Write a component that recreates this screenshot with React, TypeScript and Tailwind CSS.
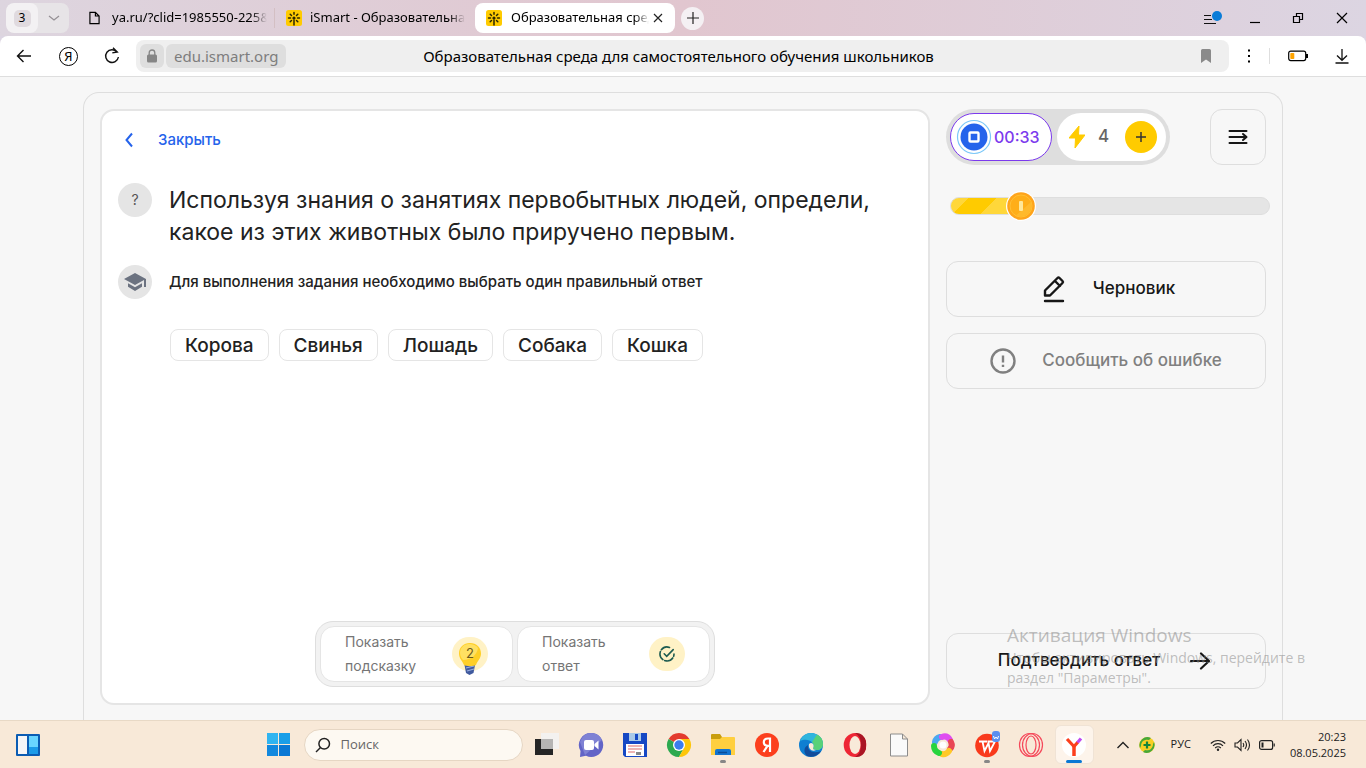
import React from "react";

const answers = ["Корова", "Свинья", "Лошадь", "Собака", "Кошка"];

function SmartLogo() {
  return (
    <svg viewBox="0 0 16 16" className="size-4 shrink-0">
      <rect width="16" height="16" rx="2.5" fill="#ffcb00" />
      <g stroke="#2b2600" strokeWidth="1.5" strokeLinecap="round">
        <path d="M8 2.6v1.6M8 10v5M2.5 8h2M11.5 8h2M4.2 4.2l1.3 1.3M11.8 4.2l-1.3 1.3M4.2 11.8l1.3-1.3M11.8 11.8l-1.3-1.3" />
      </g>
      <circle cx="8" cy="8" r="1.6" fill="#2b2600" />
    </svg>
  );
}

function TabStrip() {
  return (
    <div className="flex h-9 shrink-0 items-center bg-linear-to-r from-[#ddd5df] via-[#e1c6cf] to-[#dcd5e2] text-[13px] text-black">
      <div className="ml-[6px] flex h-[30px] w-[63px] shrink-0 overflow-hidden rounded-lg bg-[#e7e4e7]">
        <button className="flex w-8 items-center justify-center rounded-lg bg-[#f3f1f3] text-xs">
          <span className="flex size-[17px] items-center justify-center rounded-[5px] bg-[#e0dadf]">3</span>
        </button>
        <button aria-label="Список вкладок" className="flex flex-1 items-center justify-center">
          <svg viewBox="0 0 12 8" className="h-2 w-3" fill="none" stroke="#969196" strokeWidth="1.3">
            <path d="M1 2l5 4 5-4" />
          </svg>
        </button>
      </div>
      <button className="ml-5 flex w-[186px] shrink-0 items-center gap-3 border-r border-[#d3bfc3] whitespace-nowrap">
        <svg viewBox="0 0 12 14" className="h-[14px] w-[11px] shrink-0" fill="none" stroke="#000" strokeWidth="1.3">
          <path d="M1 .8h6l4 4v8.4H1zM7 .8v4h4" />
        </svg>
        <span className="w-[155px] overflow-hidden mask-r-from-90% text-left">ya.ru/?clid=1985550-225&amp;</span>
      </button>
      <button className="ml-[11px] flex w-[189px] shrink-0 items-center gap-2 whitespace-nowrap">
        <SmartLogo />
        <span className="w-[155px] overflow-hidden mask-r-from-90% text-left">iSmart - Образовательная</span>
      </button>
      <div className="flex h-[30px] w-[200px] shrink-0 items-center rounded-lg bg-white px-[11px] whitespace-nowrap">
        <SmartLogo />
        <span className="ml-[9px] w-[138px] overflow-hidden mask-r-from-90%">Образовательная среда</span>
        <button aria-label="Закрыть вкладку" className="ml-1">
          <svg viewBox="0 0 10 10" className="size-[10px]" stroke="#222" strokeWidth="1.2">
            <path d="M1 1l8 8M9 1l-8 8" />
          </svg>
        </button>
      </div>
      <button aria-label="Новая вкладка" className="ml-[6px] flex size-[23px] shrink-0 items-center justify-center rounded-full bg-[#f4f0f3]">
        <svg viewBox="0 0 12 12" className="size-3" stroke="#222" strokeWidth="1.2">
          <path d="M6 0v12M0 6h12" />
        </svg>
      </button>
      <div className="ml-auto flex items-center pr-[18px]">
        <button aria-label="Меню" className="mr-[27px]">
          <svg viewBox="0 0 20 16" className="h-4 w-5" fill="none" stroke="#111" strokeWidth="1.2">
            <path d="M1 5.5h7M1 9.5h8M1 13.5h12" />
            <circle cx="14" cy="6" r="5" fill="#0a7cd8" stroke="none" />
          </svg>
        </button>
        <button aria-label="Свернуть" className="mr-8">
          <svg viewBox="0 0 10 12" className="h-3 w-[10px]" stroke="#000" strokeWidth="1.2">
            <path d="M0 10.5h10" />
          </svg>
        </button>
        <button aria-label="Развернуть" className="mr-8">
          <svg viewBox="0 0 12 12" className="size-3" fill="none" stroke="#000" strokeWidth="1.2">
            <path d="M1.5 4.5h6v6h-6zM4.500 4.500v-3h6v6h-3" />
          </svg>
        </button>
        <button aria-label="Закрыть">
          <svg viewBox="0 0 12 12" className="size-3" stroke="#000" strokeWidth="1.2">
            <path d="M1 1l10 10M11 1L1 11" />
          </svg>
        </button>
      </div>
    </div>
  );
}

function AddressBar() {
  return (
    <div className="shrink-0 bg-[#dcd5e2]">
      <div className="flex h-[41px] items-center rounded-t-lg border-b border-[#dedede] bg-white pr-[17px] pl-4 text-[15px] text-black">
        <button aria-label="Назад" className="mr-[27px]">
          <svg viewBox="0 0 16 16" className="size-4" fill="none" stroke="#111" strokeWidth="1.4">
            <path d="M15 8H1.500M7.500 2l-6 6 6 6" />
          </svg>
        </button>
        <button aria-label="Яндекс" className="mr-[26px] flex size-[19px] items-center justify-center rounded-full border border-black text-[13px] leading-none">
          Я
        </button>
        <button aria-label="Обновить" className="mr-4">
          <svg viewBox="0 0 16 18" className="h-[18px] w-4" fill="none" stroke="#111" strokeWidth="1.4">
            <path d="M13 5A6.400 6.400 0 1 0 14.400 10M9 .8l4.300 4.200-5 .9" />
          </svg>
        </button>
        <div className="relative flex h-8 flex-1 items-center rounded-lg bg-[#efefef] pl-1">
          <button aria-label="Защита" className="flex size-6 items-center justify-center rounded-md bg-[#dedede]">
            <svg viewBox="0 0 12 14" className="h-[14px] w-3">
              <rect x="1" y="5.500" width="10" height="8" rx="1.500" fill="#858585" />
              <path d="M3.200 6V3.800a2.800 2.800 0 0 1 5.600 0V6" fill="none" stroke="#858585" strokeWidth="1.300" />
            </svg>
          </button>
          <button className="ml-[2px] flex h-6 items-center rounded-md bg-[#dedede] px-2 text-[#7d7d7d]">
            edu.ismart.org
          </button>
          <span className="pointer-events-none absolute inset-x-0 pr-2 text-center whitespace-nowrap">
            Образовательная среда для самостоятельного обучения школьников
          </span>
          <button aria-label="Закладка" className="mr-[18px] ml-auto">
            <svg viewBox="0 0 10 14" className="h-[14px] w-[10px]" fill="#8a8a8a">
              <path d="M1.500 0h7A1.500 1.500 0 0 1 10 1.500V14L5 10.500 0 14V1.500A1.500 1.500 0 0 1 1.500 0z" />
            </svg>
          </button>
        </div>
        <button aria-label="Ещё" className="ml-[18px]">
          <svg viewBox="0 0 4 14" className="h-[14px] w-1" fill="#000">
            <path d="M1 .5h2v2H1zM1 6h2v2H1zM1 11.500h2v2H1z" />
          </svg>
        </button>
        <div className="ml-[18px] h-4 w-px bg-[#dedede]" />
        <svg viewBox="0 0 20 12" className="mr-[27px] ml-[18px] h-3 w-5" fill="none">
          <rect x=".7" y="1.200" width="17" height="9.400" rx="2" stroke="#000" strokeWidth="1.200" />
          <rect x="2.300" y="3" width="4" height="6" rx=".8" fill="#ffa400" />
          <path d="M19 4v4" stroke="#000" strokeWidth="2" />
        </svg>
        <button aria-label="Загрузки">
          <svg viewBox="0 0 14 16" className="h-4 w-[14px]" fill="none" stroke="#111" strokeWidth="1.300">
            <path d="M7 1v11M2 7.500l5 4.800 5-4.800M.5 15h13" />
          </svg>
        </button>
      </div>
    </div>
  );
}

function HintBar() {
  return (
    <div className="mx-auto mt-auto grid w-full max-w-[400px] grid-cols-2 gap-1 rounded-[18px] border border-[#dedede] bg-[#f2f2f2] p-1 text-sm leading-6 text-[#757575]">
      <button className="flex h-14 items-center justify-between rounded-[14px] border border-[#e5e5e5] bg-white px-6 text-left">
        <span>
          Показать
          <br />
          подсказку
        </span>
        <span className="relative flex h-[34px] w-9 items-center justify-center rounded-full bg-[#fff2c6]">
          <svg viewBox="0 0 36 42" className="absolute top-0 left-0 h-[42px] w-9">
            <path d="M12.500 28l1.500 8 3.500 2 4-2 1.500-8z" fill="#405a9e" />
            <path d="M14 31l8-2M15 34l7-2" stroke="#9aaee0" strokeWidth="1.200" />
            <path d="M18 6c-6.500 0-11 4.600-11 10.500 0 5 3.200 7 5 11.500 1.500 1.500 10 1.500 12 0 1.600-4.400 5-6.500 5-11.500C29 10.600 24.500 6 18 6z" fill="#ffcf26" />
            <path d="M17 7c-5.500 0-9 4-9 9 0 3 1.500 5 3 7 8 0 14-5 15-12-2-2.500-5-4-9-4z" fill="#ffe062" />
          </svg>
          <span className="relative pb-[2px] text-[13px] leading-none text-[#6b5a1e]">2</span>
        </span>
      </button>
      <button className="flex h-14 items-center justify-between rounded-[14px] border border-[#e5e5e5] bg-white px-6 text-left">
        <span>
          Показать
          <br />
          ответ
        </span>
        <span className="flex h-[34px] w-9 items-center justify-center rounded-full bg-[#fff2c6]">
          <svg viewBox="0 0 16 16" className="size-4" fill="none" stroke="#1d5b50" strokeWidth="1.600" strokeLinecap="round">
            <path d="M10.500 1.400A7 7 0 1 0 15 8" strokeDasharray="9 2" />
            <path d="M5.200 7.800l2.500 2.500 6.500-6.700" />
          </svg>
        </span>
      </button>
    </div>
  );
}

function TaskCard() {
  return (
    <section className="flex min-w-0 flex-1 flex-col rounded-[14px] border-2 border-[#e5e5e5] bg-white px-4 pb-4 text-[#222]">
      <button className="mt-[17px] flex items-center gap-6 self-start pl-[6px] text-[15px] leading-6 font-medium text-[#2563eb]">
        <svg viewBox="0 0 10 16" className="h-4 w-[10px]" fill="none" stroke="#2563eb" strokeWidth="2">
          <path d="M8 1.500L2.500 8 8 14.500" />
        </svg>
        Закрыть
      </button>
      <div className="mt-[31px] flex gap-[17px]">
        <div className="flex size-[34px] shrink-0 items-center justify-center rounded-full bg-[#e5e5e5] text-sm text-[#555]">?</div>
        <h1 className="pt-px text-[23px] leading-8 font-normal">
          Используя знания о занятиях первобытных людей, определи, какое из этих животных было приручено первым.
        </h1>
      </div>
      <div className="mt-[17px] flex items-center gap-[17px]">
        <div className="flex size-[34px] shrink-0 items-center justify-center rounded-full bg-[#e5e5e5]">
          <svg viewBox="0 0 24 24" className="size-6" fill="#6b7280">
            <path d="M5 13.200v3.600L12 21l7-4.200v-3.600L12 17.300zM12 3L1 9l11 6 9-4.900V17h2V9z" />
          </svg>
        </div>
        <p className="text-[15px] font-medium">Для выполнения задания необходимо выбрать один правильный ответ</p>
      </div>
      <div className="mt-[30px] ml-[52px] flex flex-wrap gap-[10px]">
        {answers.map((item) => (
          <button key={item} className="h-8 rounded-lg border border-[#e5e5e5] bg-white px-[14px] text-[19px] leading-none font-medium">
            {item}
          </button>
        ))}
      </div>
      <HintBar />
    </section>
  );
}

function Sidebar() {
  return (
    <aside className="flex w-80 shrink-0 flex-col pb-4 text-[17px] font-medium text-[#171717]">
      <div className="flex justify-between">
        <div className="flex h-14 w-56 items-center gap-[5px] rounded-full bg-[#dedede] px-1">
          <div className="flex h-12 w-[102px] items-center rounded-full border border-[#7c3aed] bg-white pl-[5px] text-[#7c3aed]">
            <svg viewBox="0 0 36 36" className="size-9 shrink-0">
              <circle cx="18" cy="18" r="16.500" fill="#fff" stroke="#7cc8f8" strokeWidth="1.200" />
              <circle cx="18" cy="18" r="13.500" fill="#2563eb" />
              <rect x="13.500" y="13.500" width="9" height="9" rx="1" fill="none" stroke="#fff" strokeWidth="2.400" />
            </svg>
            <span className="ml-[2px] text-base">00:33</span>
          </div>
          <div className="flex h-12 flex-1 items-center rounded-full bg-white pr-[9px] pl-3 text-[#666]">
            <svg viewBox="0 0 16 22" className="h-[22px] w-4" fill="#ffcb00">
              <path d="M10 0L0 12h6.500L6 22 16 9H9.500z" stroke="#ffcb00" strokeLinejoin="round" />
            </svg>
            <span className="ml-[13px]">4</span>
            <button aria-label="Добавить" className="ml-auto flex size-8 items-center justify-center rounded-full bg-[#ffcb00]">
              <svg viewBox="0 0 10 10" className="size-[10px]" stroke="#333" strokeWidth="1.500">
                <path d="M5 0v10M0 5h10" />
              </svg>
            </button>
          </div>
        </div>
        <button aria-label="Список заданий" className="flex size-14 items-center justify-center rounded-xl border border-[#dedede]">
          <svg viewBox="0 0 20 16" className="h-4 w-5" fill="none" stroke="#171717" strokeWidth="2" strokeLinecap="round" strokeLinejoin="round">
            <path d="M1.500 2h17M1.500 8h16M1.500 14h17M15 5l3.500 3-3.500 3" />
          </svg>
        </button>
      </div>

      <div className="relative mt-8 -mr-1 ml-1 h-[18px] rounded-full border border-[#dedede] bg-[#e5e5e5]">
        <div className="h-full w-[22%] rounded-full bg-[linear-gradient(135deg,#ffd73a_20%,#ffcb00_20%,#ffcb00_53%,#ffd73a_53%)]" />
        <svg viewBox="0 0 30 30" className="absolute -top-[7px] left-[55px] size-[30px]">
          <circle cx="15" cy="15" r="15" fill="#fff" />
          <circle cx="15" cy="15" r="13.800" fill="#ffa41b" />
          <circle cx="15" cy="15" r="11" fill="#ffae19" stroke="#ffc034" />
          <path d="M10 24.500A11 11 0 0 0 25 11z" fill="#ffb92c" />
          <rect x="13" y="10" width="4" height="10" rx="1" fill="#ffe79a" />
        </svg>
      </div>

      <button className="mt-[46px] flex h-14 items-center justify-center gap-[26px] rounded-xl border border-[#dedede] pl-1">
        <svg viewBox="0 0 26 28" className="h-7 w-[26px]" fill="none" stroke="#171717" strokeWidth="2.400" strokeLinecap="round" strokeLinejoin="round">
          <path d="M4 26h18M4 20.500v-5L16.500 3q1-1 2 0l3 3q1 1 0 2L9 20.500zM14 6l5 5" />
        </svg>
        Черновик
      </button>
      <button className="mt-4 flex h-14 items-center justify-center gap-[26px] rounded-xl border border-[#dedede] text-[#808080]">
        <svg viewBox="0 0 26 26" className="size-[26px]" fill="none" stroke="#808080" strokeWidth="2.400">
          <circle cx="13" cy="13" r="11.500" />
          <path d="M13 7.500v7M13 16.800v2.200" />
        </svg>
        Сообщить об ошибке
      </button>
      <div className="relative mt-auto">
        <button className="flex h-14 w-full items-center justify-center gap-[30px] rounded-xl border border-[#dedede] pr-1">
          Подтвердить ответ
          <svg viewBox="0 0 20 18" className="h-[18px] w-5" fill="none" stroke="#171717" strokeWidth="2.200" strokeLinecap="round" strokeLinejoin="round">
            <path d="M1 9h18M11 1.500L19 9l-8 7.500" />
          </svg>
        </button>
        <div className="pointer-events-none absolute -top-[10px] left-[61px] w-[310px] font-['Open_Sans',sans-serif] font-normal text-[#8a8a8a]/55">
          <div className="text-[19px] leading-6">Активация Windows</div>
          <div className="mt-px text-sm leading-5">Чтобы активировать Windows, перейдите в раздел "Параметры".</div>
        </div>
      </div>
    </aside>
  );
}

const apps = [
  {
    name: "Представление задач",
    icon: (
      <>
        <path d="M0 6h18v16H0z" fill="#252525" />
        <path d="M6 0h18v16H6z" fill="#f3f1ef" />
        <path d="M6 6h12v10H6z" fill="#b5b4b3" />
      </>
    ),
  },
  {
    name: "Чат",
    icon: (
      <>
        <path d="M12 0a12 12 0 1 1-5 22.800L1 24l.5-6A12 12 0 0 1 12 0z" fill="#6264c7" />
        <path d="M12 0A12 12 0 0 1 23 7L6 22 1 9Q4 0 12 0z" fill="#7f82d4" />
        <rect x="5" y="7" width="10" height="10" rx="2" fill="#fff" />
        <path d="M15.500 11l4-3.500v9l-4-3.500z" fill="#fff" />
      </>
    ),
  },
  {
    name: "Total Commander",
    icon: (
      <>
        <path d="M0 0h24v24H2l-2-2z" fill="#1648c4" />
        <path d="M6 0h12v8H6z" fill="#a9c9e8" />
        <path d="M12 1h3v6h-3z" fill="#1648c4" />
        <path d="M3 11h18v12H3z" fill="#fff" />
        <path d="M5 13h14M5 16h14M5 19h7" stroke="#df6b69" strokeWidth="1.200" />
        <path d="M13 19h5v3h-5z" fill="#888" />
      </>
    ),
  },
  {
    name: "Chrome",
    icon: (
      <>
        <path d="M12 12L1.600 6A12 12 0 0 1 22.400 6z" fill="#e33b2e" />
        <path d="M12 12L1.600 6A12 12 0 0 0 12 24l5-9z" fill="#2da94f" />
        <path d="M12 12l5 3-5 9A12 12 0 0 0 22.400 6H12z" fill="#fdc60a" />
        <circle cx="12" cy="12" r="6" fill="#fff" />
        <circle cx="12" cy="12" r="4.700" fill="#3b7ded" />
      </>
    ),
  },
  {
    name: "Проводник",
    running: true,
    icon: (
      <>
        <path d="M0 2q0-1 1-1h8l2 3v4H0z" fill="#c99d0d" />
        <path d="M0 6h9l2-2h12q1 0 1 1v17H0z" fill="#ffcf3f" />
        <path d="M4 22v-4q0-2 2-2h12q2 0 2 2v4z" fill="#1274d0" />
        <path d="M7 19.500h9" stroke="#0a4c98" strokeWidth="1.500" />
      </>
    ),
  },
  {
    name: "Яндекс",
    icon: (
      <>
        <circle cx="12" cy="12" r="12" fill="#fc3f1d" />
        <path d="M15 19V5.500h-2Q8.800 5.500 8.800 9.300q0 3.500 4.200 3.500h2M12.500 12.800L8.500 19" fill="none" stroke="#fff" strokeWidth="2.200" />
      </>
    ),
  },
  {
    name: "Edge",
    icon: (
      <>
        <circle cx="12" cy="12" r="12" fill="#0f7fd2" />
        <path d="M1 8C3 3 7 0 12 0c7 0 12 5 12 11 0 4-3 6-6 6-2 0-4-1-4-2 3-5-5-11-13-7z" fill="#30b5dd" />
        <path d="M18 1.600Q24 5 24 11c0 4-3 6-6 6-2 0-4-1-4-2 1-2 1-4-1-6z" fill="#58d178" />
        <path d="M9 12c-1 6 5 9 13 6-3 5-9 7-14 5-4-4-3-9 1-11z" fill="#124c9b" />
        <path d="M10 11c3-3 6 1 4 4 0 1 1 2 3 2-4 2-8-1-7-6z" fill="#f8ead9" />
      </>
    ),
  },
  {
    name: "Opera",
    icon: (
      <>
        <ellipse cx="12" cy="12" rx="11.300" ry="12" fill="#ee2635" />
        <path d="M12 0q8-1 11 8v8q-3 9-11 8 6-3 6-12T12 0z" fill="#aa1524" />
        <ellipse cx="12" cy="12" rx="5.500" ry="9" fill="#f8ead9" />
      </>
    ),
  },
  {
    name: "Документ",
    icon: (
      <path d="M3.500 1h12l5 5v17h-17zM15.500 1v5h5" fill="#fafafa" stroke="#8c8c8c" />
    ),
  },
  {
    name: "Фото",
    icon: (
      <>
        <g fill="none" strokeWidth="6" strokeLinecap="round">
          <path d="M4 9q1-4 5-5" stroke="#4aa8f0" />
          <path d="M11 4q5-2 8 3" stroke="#df4df0" />
          <path d="M20 9q2 4-1 7" stroke="#e94654" />
          <path d="M18 18q-3 4-7 3" stroke="#ffc928" />
          <path d="M8 20q-5-2-5-7" stroke="#28d43e" />
        </g>
        <circle cx="12" cy="12" r="3.500" fill="#fff" />
      </>
    ),
  },
  {
    name: "WPS Office",
    running: true,
    icon: (
      <>
        <circle cx="12" cy="12.500" r="11.800" fill="#f93a1c" />
        <path d="M4 8.500h3.500l2 9.500 4-8 1.500 8 5-9.500h-7M7.500 8.500h5" fill="none" stroke="#fff" strokeWidth="1.800" />
        <rect x="17" y="-2" width="8" height="11" rx="3" fill="#5a8ff0" />
        <path d="M18.500 3l1 3 1.500-2 1.500 2 1-3" fill="none" stroke="#fff" />
      </>
    ),
  },
  {
    name: "Opera GX",
    icon: (
      <g fill="none" stroke="#f5485a" strokeWidth="1.200">
        <ellipse cx="10.500" cy="12" rx="10" ry="11.500" />
        <ellipse cx="13.500" cy="12" rx="10" ry="11.500" />
        <ellipse cx="12" cy="12" rx="5" ry="9" />
      </g>
    ),
  },
];

function Taskbar() {
  return (
    <footer className="flex h-12 shrink-0 items-center border-t border-[#e8d9c6] bg-[#f8e9d8] font-['Open_Sans',sans-serif] text-[#222]">
      <div className="flex flex-1 pl-4">
        <button aria-label="Виджеты">
          <svg viewBox="0 0 24 22" className="h-[22px] w-6">
            <rect width="24" height="22" rx="1" fill="#0b5cb3" />
            <path d="M2 2h9v18H2z" fill="#f5f5f7" />
            <path d="M13 2h9v11h-9z" fill="#6ad5ff" />
            <path d="M13 13h9v7h-9z" fill="#1c9be8" />
          </svg>
        </button>
      </div>
      <div className="flex h-full shrink-0 items-center pr-3">
        <button aria-label="Пуск" className="flex w-11 justify-center">
          <svg viewBox="0 0 23 23" className="size-[23px]">
            <path d="M0 0h11v11H0z" fill="#30b4f0" />
            <path d="M12 0h11v11H12z" fill="#1a9ee8" />
            <path d="M0 12h11v11H0z" fill="#1288de" />
            <path d="M12 12h11v11H12z" fill="#0a78d4" />
          </svg>
        </button>
        <label className="mr-[2px] ml-[3px] flex h-8 w-[219px] items-center gap-[10px] rounded-full border border-[#e6d6c3] bg-[#fdf9f2] pl-[10px]">
          <svg viewBox="0 0 16 16" className="size-4 shrink-0" fill="none" stroke="#222" strokeWidth="1.500">
            <circle cx="9.200" cy="6.700" r="5.300" />
            <path d="M5.500 10.500L1 15" />
          </svg>
          <input aria-label="Поиск" placeholder="Поиск" className="w-full min-w-0 bg-transparent text-[13px] outline-none placeholder:text-[#666]" />
        </label>
        {apps.map((app) => (
          <button key={app.name} aria-label={app.name} className="relative flex h-full w-11 items-center justify-center">
            <svg viewBox="0 0 24 24" className="size-6 overflow-visible">
              {app.icon}
            </svg>
            {app.running && <span className="absolute bottom-[5px] h-[3px] w-[6px] rounded-full bg-[#878787]" />}
          </button>
        ))}
        <button aria-label="Яндекс Браузер" className="relative ml-[2px] flex h-[39px] w-[39px] items-center justify-center rounded-md border border-[#f0e3d5] bg-[#fdf4eb]">
          <svg viewBox="0 0 24 24" className="size-6">
            <circle cx="12" cy="12" r="12" fill="#fff" />
            <path d="M12 13v10" stroke="#fc3f1d" strokeWidth="3.500" />
            <path d="M5 6l7 7.500" stroke="#fc3f1d" strokeWidth="3.200" />
            <path d="M12 13.500l4-4.500" stroke="#fc3f1d" strokeWidth="3.200" />
            <path d="M15.500 9.500L19 5.500" stroke="#c04af0" strokeWidth="3.200" />
          </svg>
          <span className="absolute bottom-0 h-[3px] w-4 rounded-full bg-[#0a78d4]" />
        </button>
      </div>
      <div className="flex flex-1 items-center justify-end pr-5 text-[11px]">
        <button aria-label="Скрытые значки" className="mr-[10px]">
          <svg viewBox="0 0 12 8" className="h-2 w-3" fill="none" stroke="#222" strokeWidth="1.400">
            <path d="M.5 7L6 1.500 11.500 7" />
          </svg>
        </button>
        <svg viewBox="0 0 16 16" className="mr-4 size-4 shrink-0">
          <circle cx="8" cy="8" r="7.800" fill="#f8cf24" />
          <path d="M1 11a8 8 0 0 1 11-10l-2 2A6 6 0 0 0 2 9zM15 5a8 8 0 0 1-11 10l2-2a6 6 0 0 0 8-6z" fill="#45a83a" />
          <path d="M8 4.500v7M4.500 8h7" stroke="#16853a" strokeWidth="2.200" />
        </svg>
        <span className="mr-[19px]">РУС</span>
        <svg viewBox="0 0 16 14" className="mr-2 h-[14px] w-4 shrink-0" fill="none" stroke="#222" strokeWidth="1.200">
          <path d="M.8 5.500a10.200 10.200 0 0 1 14.400 0M3 7.800a7 7 0 0 1 10 0M5.200 10a4 4 0 0 1 5.600 0" />
          <circle cx="8" cy="11.800" r="1.200" fill="#222" stroke="none" />
        </svg>
        <svg viewBox="0 0 17 14" className="mr-2 h-[14px] w-[17px] shrink-0" fill="none" stroke="#222" strokeWidth="1.100">
          <path d="M1 5h2.500L7 1.500v11L3.500 9H1zM9 5q1.500 2 0 4M11 3q3 4 0 8M13.500 1.500q4 5.500 0 11" />
        </svg>
        <svg viewBox="0 0 16 10" className="mr-[15px] h-[10px] w-4 shrink-0" fill="none" stroke="#222" strokeWidth="1.200">
          <rect x=".6" y=".6" width="13" height="8.800" rx="2" />
          <path d="M2.500 2.500h2v5h-2z" fill="#222" stroke="none" />
          <path d="M15.200 3.500v3" />
        </svg>
        <div className="text-right leading-4">
          20:23
          <br />
          08.05.2025
        </div>
      </div>
    </footer>
  );
}

export default function App() {
  return (
    <div className="flex h-screen flex-col overflow-hidden bg-[#f7f7f7] font-['Inter',sans-serif]">
      <header className="font-['Noto_Sans',sans-serif]">
        <TabStrip />
        <AddressBar />
      </header>
      <main className="flex min-h-0 flex-1 flex-col pt-[15px]">
        <div className="mx-auto flex w-full max-w-[1200px] flex-1 gap-4 rounded-t-2xl border border-b-0 border-[#dedede] px-4 pt-4 pb-[15px]">
          <TaskCard />
          <Sidebar />
        </div>
      </main>
      <Taskbar />
    </div>
  );
}
